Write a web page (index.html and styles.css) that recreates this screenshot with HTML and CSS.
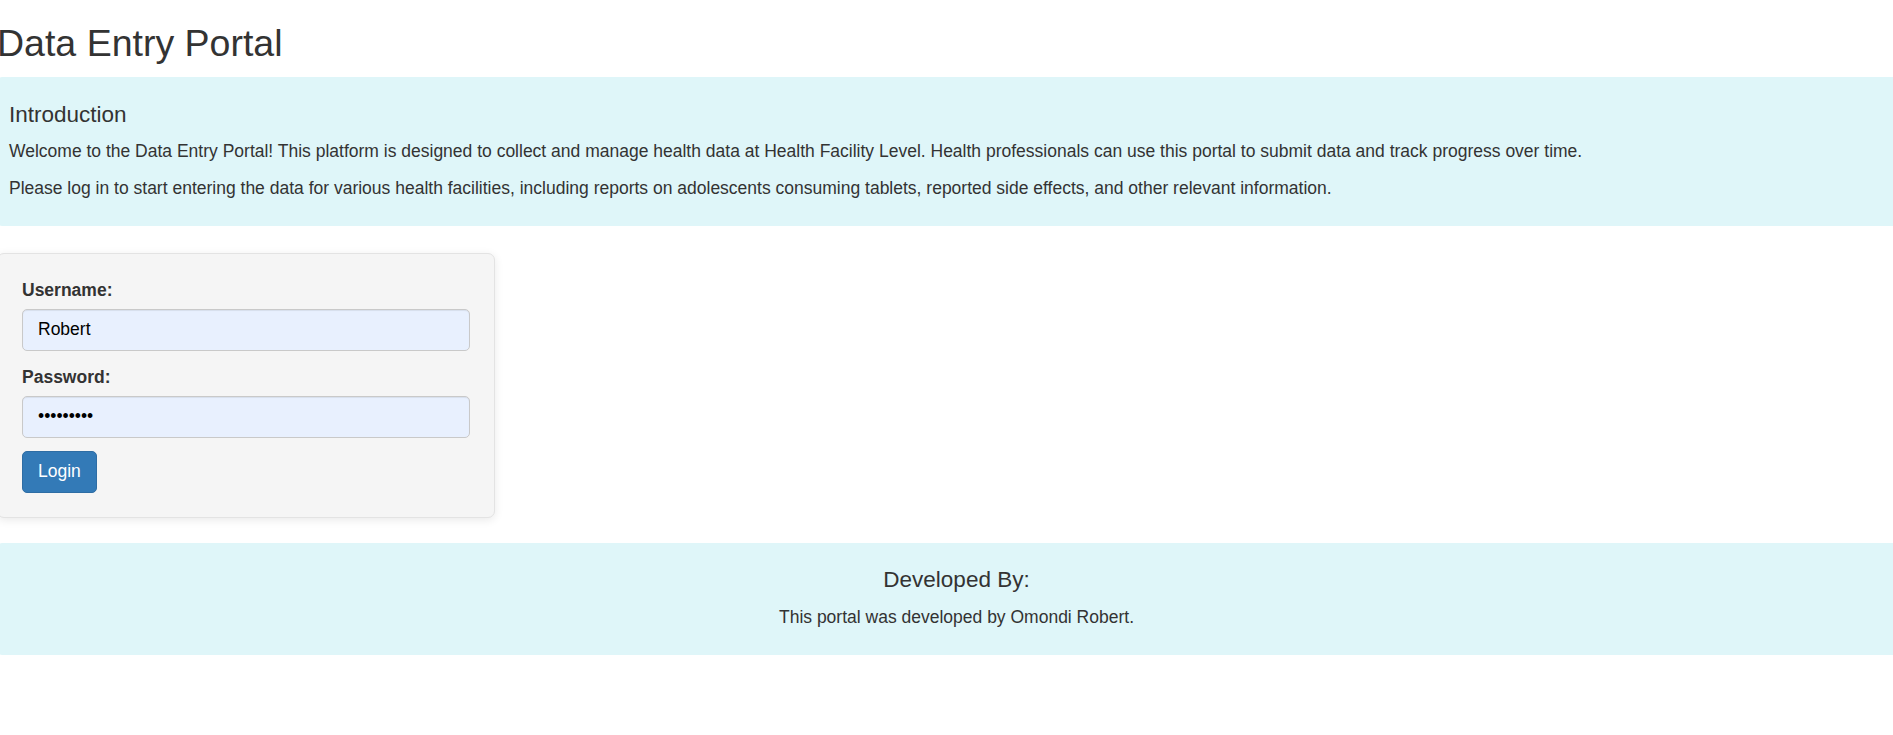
FILE: index.html
```html
<!DOCTYPE html>
<html lang="en">
<head>
<meta charset="utf-8">
<title>Data Entry Portal</title>
<link rel="stylesheet" href="styles.css">
</head>
<body>
<div class="page">
  <h2 class="title">Data Entry Portal</h2>

  <section class="info-box intro">
    <h4>Introduction</h4>
    <p>Welcome to the Data Entry Portal! This platform is designed to collect and manage health data at Health Facility Level. Health professionals can use this portal to submit data and track progress over time.</p>
    <p>Please log in to start entering the data for various health facilities, including reports on adolescents consuming tablets, reported side effects, and other relevant information.</p>
  </section>

  <form class="login-panel" onsubmit="return false;">
    <div class="form-group user-group">
      <label class="control-label" for="username">Username:</label>
      <input class="form-control" id="username" type="text" value="Robert">
    </div>
    <div class="form-group pass-group">
      <label class="control-label" for="password">Password:</label>
      <input class="form-control" id="password" type="password" value="abcdefghi">
    </div>
    <button class="btn-login" type="button">Login</button>
  </form>

  <footer class="info-box credits">
    <h4>Developed By:</h4>
    <p>This portal was developed by Omondi Robert.</p>
  </footer>
</div>
</body>
</html>
```
FILE: styles.css
```css
html, body {
  overflow-x: hidden;
}

body {
  margin: 0;
  font-family: "Liberation Sans", Arial, Helvetica, sans-serif;
  font-size: 17.5px;
  line-height: 25px;
  color: #333;
  background: #fff;
}

.page {
  margin-left: -3px;
  width: calc(100% + 26px);
}

.title {
  font-size: 37.5px;
  font-weight: 400;
  line-height: 1.1;
  margin: 23px 0 12.5px;
  color: #333;
}

.info-box {
  background: #dff6f9;
  border-radius: 5px;
  padding: 12.5px 12px;
}

.info-box h4 {
  font-size: 22.5px;
  font-weight: 400;
  line-height: 1.1;
  margin: 12.5px 0 12.5px;
}

.info-box p {
  margin: 0 0 12.5px;
}

.intro {
  margin-bottom: 26.5px;
}

.intro h4 {
  margin: 14px 0 10.5px;
}

.login-panel {
  box-sizing: border-box;
  width: 498px;
  background: #f5f5f5;
  border: 1px solid #e3e3e3;
  border-radius: 7px;
  padding: 24px;
  margin: 0 0 25.5px;
  box-shadow: 0 2px 10px rgba(0, 0, 0, 0.09);
}

.form-group {
  margin-bottom: 14px;
}

.pass-group {
  margin-bottom: 13px;
}

.control-label {
  display: block;
  font-weight: 700;
  margin-bottom: 6px;
}

.form-control {
  display: block;
  box-sizing: border-box;
  width: 100%;
  height: 42px;
  padding: 7.5px 15px;
  font-family: inherit;
  font-size: 17.5px;
  line-height: 25px;
  color: #000;
  background: #e8f0fe;
  border: 1px solid #c9c9c9;
  border-radius: 5px;
  box-shadow: inset 0 1px 1px rgba(0, 0, 0, 0.075);
  outline: none;
}

.btn-login {
  display: block;
  box-sizing: border-box;
  height: 42px;
  padding: 7.5px 15px;
  font-family: inherit;
  font-size: 17.5px;
  line-height: 25px;
  color: #fff;
  background: #337ab7;
  border: 1px solid #2e6da4;
  border-radius: 5px;
  cursor: pointer;
}

.credits {
  text-align: center;
}
```
